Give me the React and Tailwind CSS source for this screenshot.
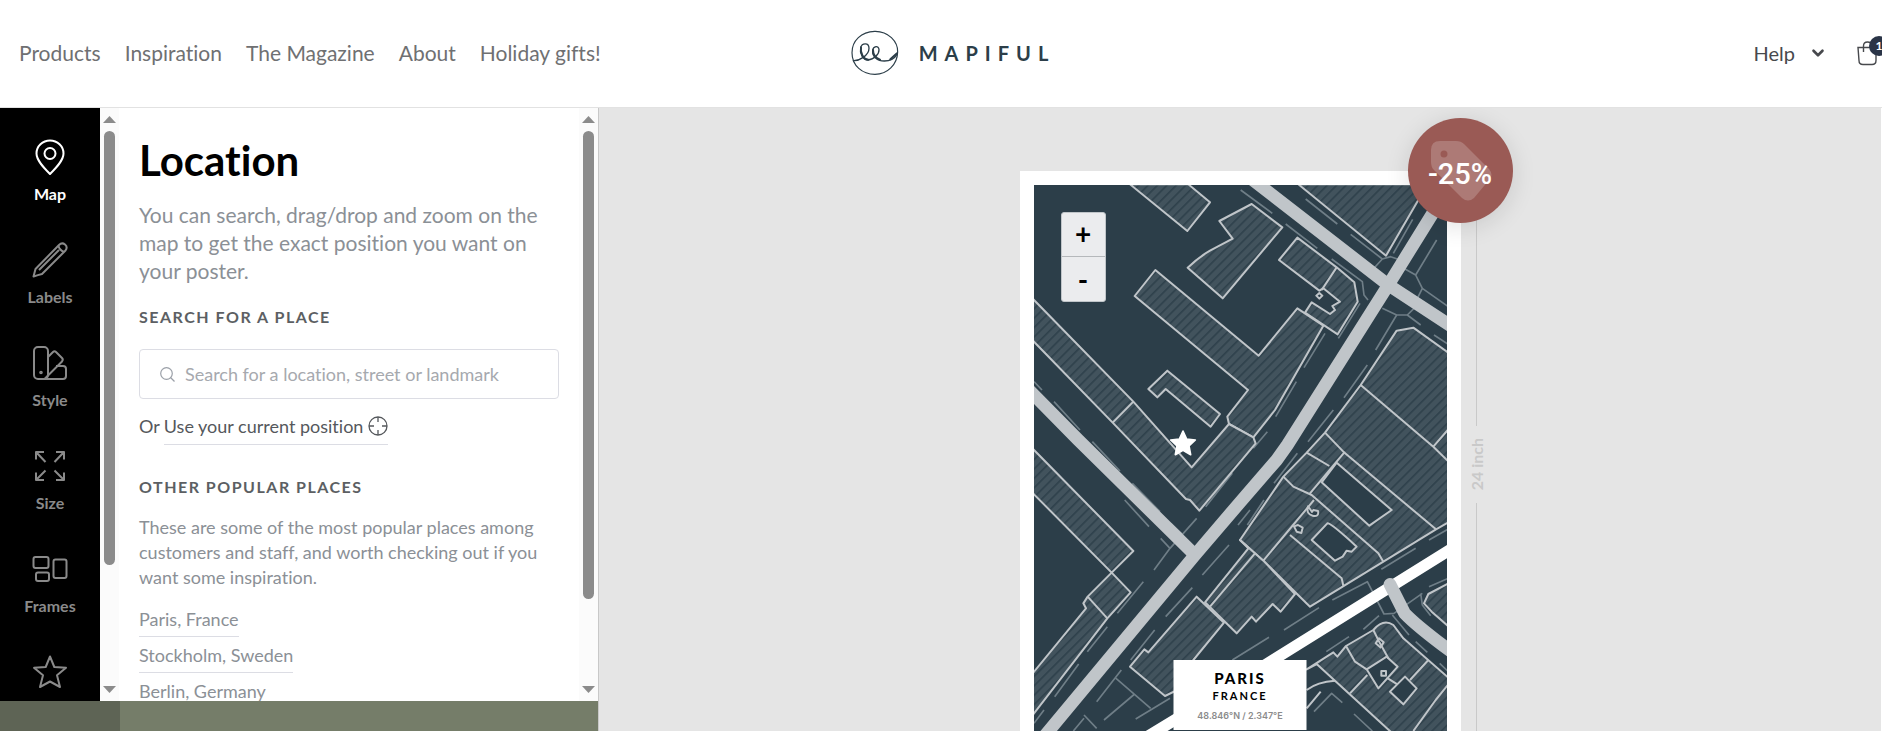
import React from "react";
import { ChevronDown } from "lucide-react";

const NAV = ["Products", "Inspiration", "The Magazine", "About", "Holiday gifts!"];
const PLACES = ["Paris, France", "Stockholm, Sweden", "Berlin, Germany"];

const ICONS = {
  Map: (
    <>
      <path d="M18 35C12 29 4.500 21.500 4.500 14.500a13.500 13 0 0 1 27 0C31.500 21.500 24 29 18 35z" />
      <circle cx="18" cy="14.500" r="5.500" />
    </>
  ),
  Labels: (
    <>
      <path d="M1.500 34.500L3.500 27 27 3q3-3 6-.5t.5 6L10 32q-4 1-8.500 2.500z" />
      <path d="M26.500 4q1 4 5.500 6M7 28L27 8" />
    </>
  ),
  Style: (
    <>
      <rect x="2" y="2" width="14" height="32" rx="4" />
      <path d="M16 12l5-5q1.500-1.500 3 0l6 6q1.500 1.500 0 3.500L13 33.500M24 21h7q3 0 3 3v7q0 3-3 3H9" />
      <circle cx="9" cy="27.500" r=".8" />
    </>
  ),
  Size: <path d="M13.500 14L4 4M4 11.500V4h8M22.500 14L32 4M24 4h8v7.500M13.500 22.500L4 32M4 24.500V32h8M22.500 22.500L32 32M24 32h8v-7.500" />,
  Frames: (
    <>
      <rect x="1.500" y="6" width="15" height="11" rx="2" />
      <rect x="4" y="21.500" width="13" height="8.500" rx="2" />
      <rect x="21.500" y="8.500" width="13" height="18.500" rx="2" />
    </>
  ),
};

function SidebarIcon({ children }) {
  return (
    <svg width="36" height="36" viewBox="0 0 36 36" fill="none" stroke="currentColor" strokeWidth="2" strokeLinejoin="round" aria-hidden="true">
      {children}
    </svg>
  );
}

function Scrollbar({ thumb }) {
  return (
    <div aria-hidden="true" className="flex w-[19px] shrink-0 flex-col items-center bg-[#fbfbfb] py-2">
      <svg width="13" height="7" className="shrink-0"><path d="M6.500 0L13 7H0z" fill="#8b8b8b" /></svg>
      <div className="flex-1 pt-2 pb-3">
        <div className={"w-[11px] rounded-full bg-[#8b8b8b] " + thumb} />
      </div>
      <svg width="13" height="7" className="shrink-0"><path d="M6.500 7L13 0H0z" fill="#8b8b8b" /></svg>
    </div>
  );
}

function Header() {
  return (
    <header className="h-[108px] shrink-0 overflow-hidden border-b border-[#e2e2e2] bg-white">
      <div className="grid h-full w-full grid-cols-[1fr_auto_1fr] items-center pr-[5px] pb-[2px] pl-[19px]">
        <nav className="flex gap-6 text-[21px] text-[#6f7072]">
          {NAV.map((n) => (
            <a key={n} href="#" className="whitespace-nowrap">{n}</a>
          ))}
        </nav>
        <a href="#" aria-label="Mapiful" className="flex items-center gap-5 pl-[10px] text-[#2c3e49]">
          <svg width="48" height="46" viewBox="0 0 144 138" fill="none" stroke="currentColor" strokeLinecap="round">
            <path d="M71 4C112 3 141 35 140 66c-1 38-31 67-68 67C34 133 3 107 3 68 3 32 31 5 71 4z" strokeWidth="3.500" />
            <path d="M7 92C24 93 54 77 54 55c0-18-21-17-25-2-4 17 8 38 22 37 18-1 34-18 33-31-1-14-17-11-19 2-2 18 14 32 35 32 19 0 32-10 38-20" strokeWidth="4" />
            <path d="M30 52c-3 17 7 36 22 37M66 60c0 12 8 24 21 29M118 88l20-18" strokeWidth="6" />
          </svg>
          <span className="text-xl leading-7 font-bold tracking-[7px]">MAPIFUL</span>
        </a>
        <div className="flex items-center justify-end gap-[30px] text-[#47494d]">
          <button type="button" className="flex items-center gap-[14px] text-xl">
            Help
            <ChevronDown size={18} strokeWidth={3.5} aria-hidden="true" />
          </button>
          <button type="button" aria-label="Cart" className="relative">
            <svg width="20" height="26" viewBox="0 0 20 26" fill="none" stroke="currentColor" strokeWidth="1.4">
              <path d="M1 7.500h18v13q0 4-4 4H6q-4 0-4-4zM6.500 12V6q0-4 4-4t4 4v6" />
            </svg>
            <span className="absolute -top-1 left-3 flex h-5 w-5 items-center justify-center rounded-full bg-[#2a3447] text-xs font-bold text-white">1</span>
          </button>
        </div>
      </div>
    </header>
  );
}

function Sidebar() {
  return (
    <nav className="flex w-[100px] shrink-0 flex-col gap-4 overflow-hidden bg-black pt-[31px]">
      {Object.keys(ICONS).map((name) => (
        <button key={name} type="button" className={"flex h-[87px] shrink-0 flex-col items-center gap-[7px] " + (name === "Map" ? "text-white" : "text-[#8a8a8a]")}>
          <SidebarIcon>{ICONS[name]}</SidebarIcon>
          <span className="text-base leading-6 font-bold">{name}</span>
        </button>
      ))}
      <button type="button" aria-label="Extras" className="flex shrink-0 flex-col items-center text-[#8a8a8a]">
        <SidebarIcon>
          <path d="M18 2.500l4.300 10.500 11.700.8-9 7.500 3 11.700L18 27.500 8 33l3-11.700-9-7.500 11.700-.8z" />
        </SidebarIcon>
      </button>
    </nav>
  );
}

function LocationPanel() {
  return (
    <section className="min-w-0 flex-1 overflow-hidden bg-white pt-[27px] pr-5 pl-5 text-[#8b9096]">
      <h1 className="text-[42px] leading-[50px] font-bold text-black">Location</h1>
      <p className="mt-4 text-[21px] leading-7">You can search, drag/drop and zoom on the map to get the exact position you want on your poster.</p>
      <h2 className="mt-5 text-base leading-6 font-bold tracking-[1.5px] text-[#5c5f63]">SEARCH FOR A PLACE</h2>
      <div className="mt-5 flex h-[50px] items-center gap-[10px] rounded border border-[#dcdde4] px-5">
        <svg width="15" height="15" viewBox="0 0 15 15" fill="none" stroke="#9ba0a8" strokeWidth="1.200" aria-hidden="true">
          <circle cx="6.500" cy="6.500" r="5.800" />
          <path d="M10.500 10.500l4 4" />
        </svg>
        <input aria-label="Search for a place" placeholder="Search for a location, street or landmark" className="min-w-0 flex-1 bg-transparent text-lg outline-none placeholder:text-[#a6a9ae]" />
      </div>
      <div className="mt-3 flex items-start gap-1 text-lg leading-[30px] text-[#55585c]">
        <span>Or</span>
        <button type="button" className="flex items-center gap-[5px] border-b border-[#dcdde4] pb-[3px]">
          Use your current position
          <svg width="20" height="20" viewBox="0 0 20 20" fill="none" stroke="currentColor" strokeWidth="1.300" aria-hidden="true">
            <circle cx="10" cy="10" r="9" />
            <path d="M10 1v5M10 14v5M1 10h5M14 10h5" />
          </svg>
        </button>
      </div>
      <h2 className="mt-[30px] text-base leading-6 font-bold tracking-[1.5px] text-[#5c5f63]">OTHER POPULAR PLACES</h2>
      <p className="mt-4 text-lg leading-[25px]">These are some of the most popular places among customers and staff, and worth checking out if you want some inspiration.</p>
      <ul className="mt-[14px] text-lg">
        {PLACES.map((p) => (
          <li key={p} className="h-9">
            <a href="#" className="inline-block border-b border-[#dcdde4] pb-[2px] leading-[30px]">{p}</a>
          </li>
        ))}
      </ul>
    </section>
  );
}

const BUILDINGS = [
  "M288-2L460 138 528 52 463-2z",
  "M653 57L745 127 566 340 461 248Q495 216 528 197L596 161 556 108z",
  "M364 255L674 512 790 370 868 422 723 675 658 757 585 717 580 695 642 615 302 333z",
  "M585 717L658 757 665 775 496 977 468 945 456 942 236 713-4 466V341L298 650 473 847z",
  "M400 557L558 687 530 725 395 612 370 637 343 612z",
  "M790 158L908 247 961 292 971 350 911 448 813 383 833 352 888 387 903 375 895 363 918 350 868 310 856 317 735 225z",
  "M793-2L1056 212 1153 45 1182-2z",
  "M1088 437L1138 428 1243 503V1012L1206 1033 828 1265 688 1127 618 1065 748 875 818 803 873 743 980 600z",
  "M618 1065L643 1090 513 1252 608 1345 653 1295 666 1310 716 1257 740 1280 783 1227 688 1127z",
  "M488 1235L570 1313 478 1425 440 1510 393 1533 288 1445 331 1393 343 1402z",
  "M-4 791L298 1098 233 1163-4 924z",
  "M233 1163L290 1222 220 1300-4 1590V1465L156 1270 148 1255 161 1235z",
  "M818 1453L898 1402 910 1415 936 1383 1018 1335Q1048 1300 1078 1320L1108 1360 1243 1478V1642H1072L848 1437z",
  "M1243 1195L1183 1227 1170 1255 1193 1280 1243 1324z",
];

const COURTYARDS = [
  "M908 833L1073 975 1006 1022 863 892z",
  "M880 1015Q890 1013 968 1085L953 1100 938 1097 926 1115 903 1127 833 1065z",
  "M998 1453L1058 1415 1091 1445 1033 1510z",
  "M1113 1475L1148 1510 1108 1558 1068 1520z",
  "M822 964q-6 24 14 28t16-14l-14-3-4 6-6-9z",
  "M792 1020l14 8-4 16-14-4-8-16z",
  "M856 324l9 8-9 9-9-9zM1035 1360l14 12-10 15-14-12zM1042 1458h14v14h-14z",
];

const DIVIDERS =
  "M298 650L236 713M908 247L863 315M980 600L1198 785 1243 829M1198 785L1243 733M873 743L928 800 1206 1033M818 803L886 843M933 800L828 925M748 875L778 905 833 930 1033 1105 1048 1130M840 945L688 1127M768 1050L923 1180 928 1202M663 1105L528 1265M161 1235L220 1300M936 1383L963 1430 998 1453M1018 1335L1038 1375 1063 1420M1058 1478L1090 1498M1183 1425L1128 1485M1000 1470L948 1525M1243 1498L1205 1545 1138 1638M818 1515Q850 1490 903 1487M818 1570L860 1520";

const PATHS =
  "M620 15L715 85M815 42L910 117M950 148L1045 222 1070 215 1090 222M755 117L850 190M893 222L985 290 990 330 1002 345M1045 222L1015 255M1136 103L1078 205M1113 252L1145 270 1208 165M1145 270L1165 310 1243 365M1165 310L1150 340M1045 370L1088 390 1120 390 1160 420M1088 390L1025 495M1120 390L1140 370M1200 450L1243 478M978 355L913 460M873 445L810 548M787 590L725 695M1000 540L930 638M898 675L822 770M700 740L658 790M0 590L24 615M60 650L138 735M175 770L258 858M295 895L378 980M272 945L345 1025M410 1015L445 1048M380 1060L408 1090 360 1155M408 1090L488 1000M595 865L515 965M635 790L600 835M648 975L612 1020M585 1080L505 1170M475 1208L395 1295M328 1190L250 1285M362 1335L290 1425M220 1325L160 1400M134 1437L62 1535M30 1575L0 1615M790 805L720 895M690 945L640 1020M262 1455L188 1550M246 1480L350 1570M302 1527L210 1605M305 1602L408 1540M150 1590L188 1630M118 1638L150 1600M595 1425L705 1357M750 1335L855 1268M895 1245L1000 1190 1050 1287 1080 1285 1165 1225M1042 1153L1145 1090M1185 1065L1243 1032M988 1333L1035 1292M877 1400L945 1355M1075 1290L1125 1350M1145 1370L1180 1402M1217 1435L1243 1460M1160 1225L1165 1260 1190 1292M840 1580L893 1525 925 1553M960 1587L1015 1638M1185 1205L1243 1180";

function CityMap() {
  return (
    <svg viewBox="0 0 1239 1638" className="block w-full bg-[#2c3e49]" role="img" aria-label="Street map" fill="none" strokeLinejoin="round">
      <defs>
        <pattern id="hatch" width="20" height="20" patternUnits="userSpaceOnUse" patternTransform="rotate(-45)">
          <rect width="20" height="20" fill="#42535d" />
          <rect width="20" height="5" fill="#2f414c" />
        </pattern>
      </defs>
      <path d={PATHS} stroke="#6f7e87" strokeWidth="5" />
      <g fill="url(#hatch)" stroke="#c0c5c9" strokeWidth="6">
        {BUILDINGS.map((d) => <path key={d} d={d} />)}
      </g>
      <g fill="#2c3e49" stroke="#c0c5c9" strokeWidth="6">
        {COURTYARDS.map((d) => <path key={d} d={d} />)}
      </g>
      <path d={DIVIDERS} stroke="#c0c5c9" strokeWidth="6" />
      <path d="M1260 1087L698 1437 340 1655" stroke="#fff" strokeWidth="34" />
      <g stroke="#c0c5c9" strokeWidth="38">
        <path d="M640-28L1063 300 1260 429" />
        <path d="M1250 0L1193 90 1063 300 760 780 728 825 618 952 483 1110 30 1655" />
        <path d="M-20 610L133 765 483 1110" />
        <path d="M1068 1198L1112 1285Q1150 1325 1260 1406" strokeLinecap="round" />
      </g>
      <path d="M447 738l11 24 26 3-19 18 5 26-23-13-23 13 5-26-19-18 26-3z" fill="#fff" stroke="#fff" strokeWidth="5" />
    </svg>
  );
}

function Canvas() {
  return (
    <main className="grid min-w-0 flex-1 grid-cols-[1fr_auto_1fr] overflow-hidden border-l border-[#c8c8c8] bg-[#e5e5e5] pt-[63px]">
      <div />
      <div className="relative w-[441px] bg-white p-[14px]">
        <CityMap />
        <div className="absolute top-[41px] left-[41px] flex w-[45px] flex-col overflow-hidden rounded-[3px] border border-[#c0c5c9] bg-[#ebecee] text-[28px] leading-none font-bold text-black">
          <button type="button" aria-label="Zoom in" className="h-11 border-b border-[#b5b8bb] pb-1">+</button>
          <button type="button" aria-label="Zoom out" className="h-11">-</button>
        </div>
        <div className="absolute top-[489px] left-1/2 flex h-[70px] w-[133px] -translate-x-1/2 flex-col items-center bg-white pt-2 whitespace-nowrap">
          <p className="text-[15px] leading-5 font-black tracking-[2px] text-black">PARIS</p>
          <p className="text-[11px] leading-4 font-bold tracking-[2px] text-black">FRANCE</p>
          <p className="mt-1 font-[Inter] text-[9px] leading-4 font-semibold text-[#8b8b8b]">48.846°N / 2.347°E</p>
        </div>
        <div className="absolute -top-[53px] -right-[52px] flex h-[105px] w-[105px] items-center justify-center rounded-full bg-[#9a5a55] shadow-[0_4px_24px_rgba(0,0,0,0.12)]">
          <svg width="62" height="62" viewBox="0 0 62 62" className="absolute top-[22px] left-[22px]" aria-hidden="true">
            <path fillRule="evenodd" d="M10 1h16q5 0 8 3l25 25q5 6 0 11L44 58q-6 5-12 0L4 30q-3-3-3-8V10q0-9 9-9zM14 10.500a3.500 3.500 0 1 0 0 7 3.500 3.500 0 0 0 0-7z" fill="#ad7a76" />
          </svg>
          <span className="relative pt-2 font-[Roboto] text-[29px] font-medium text-white">-25%</span>
        </div>
      </div>
      <div className="flex w-8 flex-col items-center text-[#c9c9c9]">
        <div className="h-[255px] w-px shrink-0 bg-[#c9c9c9]" />
        <div className="flex h-[77px] shrink-0 items-center">
          <span className="rotate-180 text-base leading-5 font-bold [writing-mode:vertical-rl]">24 inch</span>
        </div>
        <div className="w-px flex-1 bg-[#c9c9c9]" />
      </div>
    </main>
  );
}

export default function App() {
  return (
    <div className="flex h-screen flex-col overflow-hidden bg-white font-[Lato,sans-serif] [font-variant-ligatures:none]">
      <Header />
      <div className="flex min-h-0 flex-1 pr-px">
        <div className="flex w-[598px] shrink-0 flex-col">
          <div className="flex min-h-0 flex-1">
            <Sidebar />
            <Scrollbar thumb="h-[434px]" />
            <LocationPanel />
            <Scrollbar thumb="h-[468px]" />
          </div>
          <div className="flex h-[30px] shrink-0">
            <div className="w-[120px] bg-[#5e6455]" />
            <div className="flex-1 bg-[#757d69]" />
          </div>
        </div>
        <Canvas />
      </div>
    </div>
  );
}
